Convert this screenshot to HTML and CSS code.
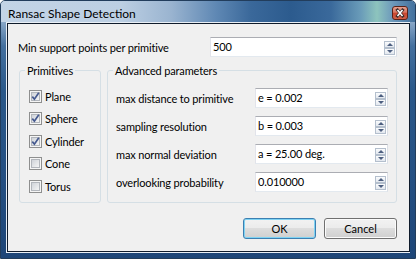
FILE: index.html
```html
<!DOCTYPE html>
<html>
<head>
<meta charset="utf-8">
<title>Ransac Shape Detection</title>
<link rel="stylesheet" href="styles.css">
</head>
<body>
<svg class="defs" width="0" height="0" aria-hidden="true">
  <defs>
    <linearGradient id="cbg" x1="0" y1="0" x2="1" y2="1">
      <stop offset="0" stop-color="#cdd1d7"/>
      <stop offset="1" stop-color="#f7f7f7"/>
    </linearGradient>
    <linearGradient id="closeg" x1="0" y1="0" x2="0" y2="1">
      <stop offset="0" stop-color="#e8a493"/>
      <stop offset="0.45" stop-color="#d67560"/>
      <stop offset="0.5" stop-color="#c8462f"/>
      <stop offset="1" stop-color="#d0634a"/>
    </linearGradient>
    <symbol id="cb" viewBox="0 0 13 13">
      <rect x="0.5" y="0.5" width="12" height="12" fill="#f5f5f5" stroke="#8e8f8f"/>
      <rect x="2.5" y="2.5" width="8" height="8" fill="url(#cbg)" stroke="#b2b6bc"/>
    </symbol>
    <symbol id="cbc" viewBox="0 0 13 13">
      <rect x="0.5" y="0.5" width="12" height="12" fill="#f5f5f5" stroke="#8e8f8f"/>
      <rect x="2.5" y="2.5" width="8" height="8" fill="url(#cbg)" stroke="#b2b6bc"/>
      <path d="M3.3 6.6 L5.4 9.2 L9.8 2.8" stroke="#45598f" stroke-width="1.7" fill="none"/>
    </symbol>
  </defs>
</svg>
<div class="window">
  <div class="titlebar">
    <span class="title">Ransac Shape Detection</span>
    <svg class="close" width="16" height="14" viewBox="0 0 16 14">
      <rect x="0.5" y="0.5" width="15" height="13" rx="2.5" fill="url(#closeg)" stroke="#5a2219"/>
      <path d="M5.5 4 L10.5 10 M10.5 4 L5.5 10" stroke="#3a2a2a" stroke-width="3" stroke-linecap="square"/>
      <path d="M5.5 4 L10.5 10 M10.5 4 L5.5 10" stroke="#ffffff" stroke-width="1.6"/>
    </svg>
  </div>
  <div class="frame">
    <div class="client">
      <div class="row-top">
        <span class="lbl">Min support points per primitive</span>
        <div class="spin spin-wide">
          <span class="val">500</span>
          <span class="arrows"><span class="arr up"></span><span class="arr down"></span></span>
        </div>
      </div>
      <div class="groups">
        <fieldset class="group prims">
          <legend>Primitives</legend>
          <div class="check"><svg class="box" width="13" height="13"><use href="#cbc"/></svg><span>Plane</span></div>
          <div class="check"><svg class="box" width="13" height="13"><use href="#cbc"/></svg><span>Sphere</span></div>
          <div class="check"><svg class="box" width="13" height="13"><use href="#cbc"/></svg><span>Cylinder</span></div>
          <div class="check"><svg class="box" width="13" height="13"><use href="#cb"/></svg><span>Cone</span></div>
          <div class="check"><svg class="box" width="13" height="13"><use href="#cb"/></svg><span>Torus</span></div>
        </fieldset>
        <fieldset class="group adv">
          <legend>Advanced parameters</legend>
          <div class="param">
            <span class="lbl">max distance to primitive</span>
            <div class="spin"><span class="val">e = 0.002</span><span class="arrows"><span class="arr up"></span><span class="arr down"></span></span></div>
          </div>
          <div class="param">
            <span class="lbl">sampling resolution</span>
            <div class="spin"><span class="val">b = 0.003</span><span class="arrows"><span class="arr up"></span><span class="arr down"></span></span></div>
          </div>
          <div class="param">
            <span class="lbl">max normal deviation</span>
            <div class="spin"><span class="val">a = 25.00 deg.</span><span class="arrows"><span class="arr up"></span><span class="arr down"></span></span></div>
          </div>
          <div class="param">
            <span class="lbl">overlooking probability</span>
            <div class="spin"><span class="val">0.010000</span><span class="arrows"><span class="arr up"></span><span class="arr down"></span></span></div>
          </div>
        </fieldset>
      </div>
      <div class="buttons">
        <button class="btn default">OK</button>
        <button class="btn">Cancel</button>
      </div>
    </div>
  </div>
</div>
</body>
</html>
```
FILE: styles.css
```css
* { box-sizing: border-box; }
html, body { margin: 0; padding: 0; }
body {
  width: 416px;
  height: 259px;
  overflow: hidden;
  font-family: Lato, "Noto Sans", sans-serif;
  font-size: 11px;
  letter-spacing: -0.15px;
  color: #000;
  background: #fff;
}
.defs { position: absolute; width: 0; height: 0; }

.window {
  width: 416px;
  height: 259px;
  border: 1px solid #223d5c;
  border-radius: 5px 5px 0 0;
  background: linear-gradient(180deg, #b8cce0 0px, #86a5c6 22px, #44709f 45px, #2a5889 90px, #244f82 180px, #1d4577 259px);
  display: flex;
  flex-direction: column;
  padding: 0 5px 5px;
}

.titlebar {
  height: 21px;
  margin: 0 -5px;
  padding: 0 7px 0 7px;
  display: flex;
  align-items: flex-start;
  justify-content: space-between;
  border-radius: 4px 4px 0 0;
  background: linear-gradient(90deg, #c3d4e6 0px, #bccfe3 120px, #9ab4d0 170px, #5f88b4 215px, #3a689a 250px, #2c5b8e 290px, #3a699b 330px, #6a9cb9 360px, #8dc4bd 376px, #6c98bb 392px, #43709d 414px);
}
.title {
  margin-top: 5px;
  line-height: 16px;
  font-size: 12px;
  letter-spacing: 0;
  white-space: nowrap;
}
.close { margin-top: 5px; display: block; }

.frame {
  flex: 1;
  border: 1px solid #e9eff6;
  display: flex;
}
.client {
  flex: 1;
  border: 1px solid #0f1b2b;
  background: #f0f0f0;
  padding: 13px 12px 0 10px;
  display: flex;
  flex-direction: column;
}

.row-top {
  display: flex;
  align-items: center;
  height: 20px;
}
.row-top .lbl { flex: 1; }

.spin {
  height: 20px;
  background: #fff;
  border: 1px solid;
  border-color: #abadb3 #dbdfe6 #e3e9ef #e2e3ea;
  display: flex;
  align-items: center;
  padding: 0 1px 0 2px;
}
.spin-wide { width: 187px; }
.spin .val { flex: 1; line-height: 16px; white-space: nowrap; }
.arrows {
  display: flex;
  flex-direction: column;
  gap: 0;
  margin-top: 1px;
}
.arr {
  width: 11px;
  height: 7px;
  border: 1px solid #b4bfcd;
  background: linear-gradient(180deg, #fbfcfd, #e3e8ef);
  display: flex;
  align-items: center;
  justify-content: center;
}
.arr::after {
  content: "";
  width: 0;
  height: 0;
  border-left: 3px solid transparent;
  border-right: 3px solid transparent;
}
.arr.up::after { border-bottom: 3px solid #4d5f80; }
.arr.down::after { border-top: 3px solid #4d5f80; }

.groups {
  display: flex;
  gap: 6px;
  margin: 6px 0 0 1px;
  height: 140px;
  width: 378px;
}
.group {
  margin: 0;
  border: 1px solid #d5dfe5;
  border-radius: 3px;
  min-width: 0;
  padding-left: 0;
  padding-right: 0;
}
.group legend {
  margin-left: 5px;
  padding: 0 2px;
  line-height: 15px;
}
.prims {
  width: 82px;
  padding-top: 7px;
}
.adv {
  width: 290px;
  padding-top: 10px;
  display: flex;
  flex-direction: column;
  gap: 8px;
}

.check {
  height: 22.5px;
  display: flex;
  align-items: center;
  gap: 3px;
  margin-left: 9px;
}
.check .box { display: block; flex: none; }

.param {
  display: flex;
  align-items: center;
  height: 20px;
  margin: 0 8px;
}
.param .lbl { flex: 1; white-space: nowrap; }
.param .spin { width: 133px; }

.buttons {
  display: flex;
  justify-content: flex-end;
  gap: 8px;
  margin-top: 15px;
}
.btn {
  width: 73px;
  height: 21px;
  padding: 0;
  font: inherit;
  color: #000;
  border: 1px solid #707070;
  border-radius: 3px;
  background: linear-gradient(180deg, #f2f2f2 0%, #ebebeb 50%, #dddddd 50%, #cfcfcf 100%);
  box-shadow: inset 0 0 0 1px #fbfbfb;
}
.btn.default {
  border-color: #3c7fb1;
  box-shadow: inset 0 0 0 1px #7fd3f3;
}
```
